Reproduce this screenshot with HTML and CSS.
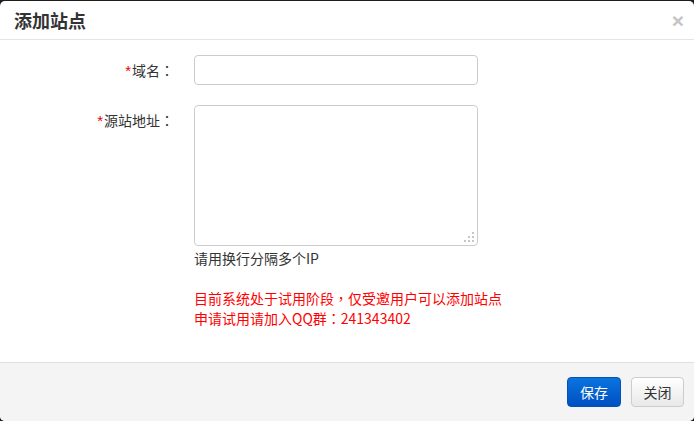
FILE: index.html
```html
<!DOCTYPE html>
<html lang="zh-CN">
<head>
<meta charset="utf-8">
<title>添加站点</title>
<link rel="stylesheet" href="styles.css">
</head>
<body>
<div class="modal">
  <div class="modal-header">
    <h3 class="modal-title">添加站点</h3>
    <span class="close">×</span>
  </div>
  <div class="modal-body">
    <div class="form-row">
      <label class="form-label"><span class="req">*</span>域名<span class="punct" lang="zh-TW">：</span></label>
      <input class="form-input" type="text">
    </div>
    <div class="form-row row-area">
      <label class="form-label"><span class="req">*</span>源站地址<span class="punct" lang="zh-TW">：</span></label>
      <div class="field">
        <div class="area-wrap">
          <textarea class="form-area"></textarea>
          <svg class="grip" width="10" height="10" viewBox="0 0 10 10">
            <rect x="8" y="0" width="2" height="2" fill="#c6c6c6"/>
            <rect x="4" y="4" width="2" height="2" fill="#c6c6c6"/>
            <rect x="8" y="4" width="2" height="2" fill="#c6c6c6"/>
            <rect x="0" y="8" width="2" height="2" fill="#c6c6c6"/>
            <rect x="4" y="8" width="2" height="2" fill="#c6c6c6"/>
            <rect x="8" y="8" width="2" height="2" fill="#c6c6c6"/>
          </svg>
        </div>
        <div class="help">请用换行分隔多个IP</div>
        <div class="notice">目前系统处于试用阶段<span class="punct" lang="zh-TW">，</span>仅受邀用户可以添加站点<br>申请试用请加入QQ群<span class="punct" lang="zh-TW">：</span>241343402</div>
      </div>
    </div>
  </div>
  <div class="modal-footer">
    <button class="btn btn-primary">保存</button>
    <button class="btn btn-default">关闭</button>
  </div>
</div>
</body>
</html>
```
FILE: styles.css
```css
html, body {
  margin: 0;
  padding: 0;
  background: #1e1e1e;
  font-family: "Noto Sans CJK SC", "Noto Sans", sans-serif;
  font-size: 14px;
  color: #333;
}
.modal {
  margin-top: 1px;
  height: 420px;
  background: #fff;
  border-radius: 5px;
  overflow: hidden;
  display: flex;
  flex-direction: column;
}
.modal-header {
  height: 38px;
  border-bottom: 1px solid #e5e5e5;
  display: flex;
  align-items: center;
  justify-content: space-between;
  padding: 0 10px 0 14px;
}
.modal-title {
  margin: 0;
  font-size: 18px;
  font-weight: bold;
  color: #333;
  line-height: 20px;
}
.close {
  font-family: "Liberation Sans", sans-serif;
  font-size: 21px;
  font-weight: bold;
  color: #c4c4c4;
  line-height: 20px;
  margin-top: 2px;
}
.modal-body {
  flex: 1;
  padding-top: 15px;
}
.form-row {
  display: flex;
  align-items: flex-start;
}
.row-area {
  margin-top: 20px;
}
.form-label {
  width: 174px;
  height: 30px;
  text-align: right;
  line-height: 30px;
  flex-shrink: 0;
  overflow: visible;
}
.punct {
  font-family: "Noto Sans CJK TC", sans-serif;
}
.req {
  color: #e60000;
  font-family: "Liberation Sans", sans-serif;
  font-size: 15px;
  line-height: 1;
  margin-right: 1px;
}
.form-input {
  margin: 0 0 0 20px;
  box-sizing: border-box;
  width: 284px;
  height: 30px;
  border: 1px solid #ccc;
  border-radius: 4px;
  padding: 4px 8px;
  font-family: inherit;
  font-size: 14px;
  outline: none;
}
.field {
  margin-left: 20px;
  display: flex;
  flex-direction: column;
}
.area-wrap {
  position: relative;
  width: 284px;
  height: 141px;
}
.form-area {
  box-sizing: border-box;
  width: 284px;
  height: 141px;
  margin: 0;
  border: 1px solid #ccc;
  border-radius: 4px;
  padding: 4px 8px;
  font-family: inherit;
  font-size: 14px;
  outline: none;
  display: block;
  resize: none;
}
.grip {
  position: absolute;
  right: 4px;
  bottom: 4px;
}
.help {
  margin-top: 2px;
  line-height: 20px;
  color: #333;
}
.notice {
  margin-top: 20px;
  line-height: 20px;
  color: #f00;
}
.modal-footer {
  border-top: 1px solid #e0e0e0;
  background: #f4f4f4;
  padding: 14px 10px 14px;
  display: flex;
  justify-content: flex-end;
  gap: 10px;
}
.btn {
  height: 30px;
  box-sizing: border-box;
  border-radius: 4px;
  font-family: inherit;
  font-size: 14px;
  padding: 0;
  line-height: 28px;
  white-space: nowrap;
  cursor: pointer;
}
.btn-primary {
  width: 54px;
  color: #fff;
  border: 1px solid #0550b5;
  background: linear-gradient(to bottom, #0a74de, #0050c2);
}
.btn-default {
  width: 53px;
  color: #333;
  border: 1px solid #ccc;
  background: linear-gradient(to bottom, #ffffff, #e8e8e8);
}
```
